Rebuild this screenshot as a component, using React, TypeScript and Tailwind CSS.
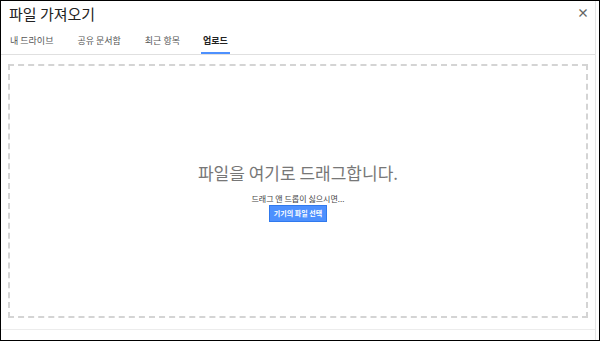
import React from "react";

export default function App() {
  const font = { fontFamily: '"Noto Sans CJK KR", "Noto Sans", Roboto, Arial, sans-serif' };
  return (
    <div className="w-[600px] h-[341px] bg-white border border-black overflow-hidden" style={font}>
      <div className="flex h-full flex-col border-r border-[#e5e5e5] mr-[3px]">
        <div className="flex items-start justify-between pl-[8px] pr-[6px] pt-[3px] h-[30px]">
          <div className="text-[15px] leading-[20px] text-[#222]">파일 가져오기</div>
          <div className="text-[12px] leading-[12px] text-[#666] mt-[3px] font-bold">×</div>
        </div>
        <div className="flex items-end h-[24px] border-b border-[#e0e0e0] pl-[9px] text-[9px] text-[#555]">
          <div className="pb-[7px] mr-[24px]">내 드라이브</div>
          <div className="pb-[7px] mr-[24px]">공유 문서함</div>
          <div className="pb-[7px] mr-[21px]">최근 항목</div>
          <div className="pb-[5px] px-[2px] font-bold text-[#222] border-b-2 border-[#4d90fe]">업로드</div>
        </div>
        <div className="flex-1 px-[7px] pt-[9px] pb-[11px]">
          <div className="h-full border-2 border-dashed border-[#d4d4d4] flex flex-col items-center justify-center">
            <div className="text-[17px] leading-[22px] text-[#777] mt-[2px]">파일을 여기로 드래그합니다.</div>
            <div className="text-[8px] leading-[10px] text-[#444] mt-[10px]">드래그 앤 드롭이 싫으시면...</div>
            <div className="mt-[1px] bg-[#4d90fe] text-white text-[7px] font-bold px-[4px] py-[3px] leading-[9px] border border-[#3079ed]">기기의 파일 선택</div>
          </div>
        </div>
        <div className="h-[11px] border-t border-[#ececec]"></div>
      </div>
    </div>
  );
}
